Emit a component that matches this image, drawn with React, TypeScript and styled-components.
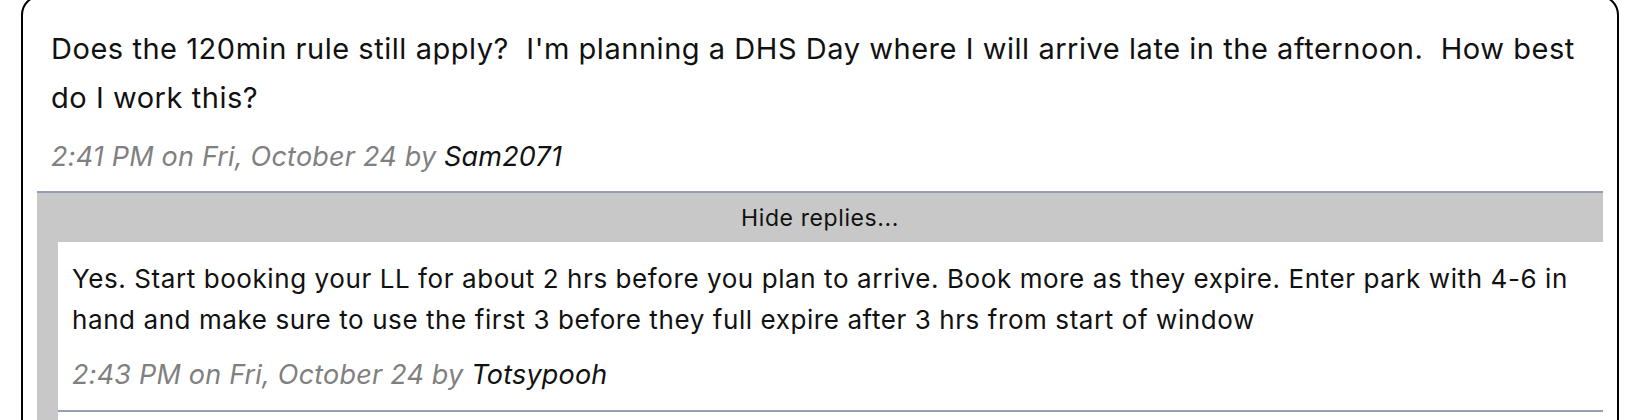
import React from 'react';
import styled, { createGlobalStyle } from 'styled-components';

const GlobalStyle = createGlobalStyle`
  html, body {
    margin: 0;
    padding: 0;
    background: #fff;
    overflow: hidden;
  }

  body {
    font-family: 'Inter', 'Liberation Sans', sans-serif;
    color: #000;
  }
`;

interface Post {
  text: string;
  time: string;
  author: string;
}

const question: Post = {
  text: "Does the 120min rule still apply?  I'm planning a DHS Day where I will arrive late in the afternoon.  How best do I work this?",
  time: '2:41 PM on Fri, October 24',
  author: 'Sam2071',
};

const replies: Post[] = [
  {
    text: 'Yes. Start booking your LL for about 2 hrs before you plan to arrive. Book more as they expire. Enter park with 4-6 in hand and make sure to use the first 3 before they full expire after 3 hrs from start of window',
    time: '2:43 PM on Fri, October 24',
    author: 'Totsypooh',
  },
];

export default function App() {
  return (
    <>
      <GlobalStyle />
      <Page>
        <Card>
          <Body>{question.text}</Body>
          <Meta>
            {question.time} by <Author>{question.author}</Author>
          </Meta>
          <Replies>
            <Toggle>Hide replies...</Toggle>
            {replies.map((reply, i) => (
              <Reply key={i}>
                <ReplyBody>{reply.text}</ReplyBody>
                <ReplyMeta>
                  {reply.time} by <Author>{reply.author}</Author>
                </ReplyMeta>
              </Reply>
            ))}
            {/* next reply begins just below the fold */}
            <ReplyFold />
          </Replies>
        </Card>
      </Page>
    </>
  );
}

const Page = styled.div`
  padding: 0 21px;
`;

const Card = styled.article`
  margin-top: -5px;
  padding: 27px 14px 0 14px;

  border: 2px solid #000;
  border-radius: 20px;
`;

const Body = styled.p`
  margin: 0;
  padding: 0 14px;

  font-size: 29px;
  letter-spacing: 0.54px;
  line-height: 49px;
  white-space: pre-wrap;
  color: #111;
`;

const Meta = styled.p`
  margin: 18px 0 17px 0;
  padding: 0 14px;

  font-size: 27px;
  letter-spacing: 0.2px;
  line-height: 34px;
  font-style: italic;
  color: #808080;
`;

const Author = styled.span`
  color: #111;
`;

const Replies = styled.section`
  border-top: 2px solid #929fba;
  background: #c8c8c8;
`;

const Toggle = styled.div`
  height: 49px;

  display: flex;
  align-items: center;
  justify-content: center;

  font-size: 23px;
  letter-spacing: 0.6px;
  color: #111;
`;

const Reply = styled.div`
  margin-left: 21px;
  padding: 16px 14px 0 14px;

  background: #fff;
  border-bottom: 2px solid #929fba;
`;

const ReplyFold = styled.div`
  margin-left: 21px;
  height: 40px;

  background: #fff;
`;

const ReplyBody = styled.p`
  margin: 0;

  font-size: 26px;
  letter-spacing: 0.58px;
  line-height: 41px;
  color: #111;
`;

const ReplyMeta = styled.p`
  margin: 18px 0 18px 0;

  font-size: 27px;
  letter-spacing: 0.2px;
  line-height: 34px;
  font-style: italic;
  color: #808080;
`;
